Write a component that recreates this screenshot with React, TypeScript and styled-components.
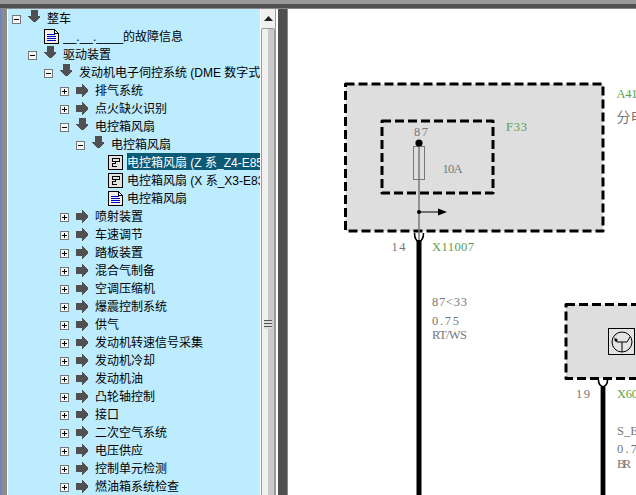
import React from 'react';
import styled, { createGlobalStyle } from 'styled-components';

type NodeKind = 'open' | 'closed' | 'doc' | 'diagram';

interface TreeNode {
  depth: number;
  kind: NodeKind;
  label: string;
  selected?: boolean;
}

const NODES: TreeNode[] = [
  { depth: 0, kind: 'open', label: '整车' },
  { depth: 1, kind: 'doc', label: '__.__.____的故障信息' },
  { depth: 1, kind: 'open', label: '驱动装置' },
  { depth: 2, kind: 'open', label: '发动机电子伺控系统 (DME 数字式电子伺控系统)' },
  { depth: 3, kind: 'closed', label: '排气系统' },
  { depth: 3, kind: 'closed', label: '点火缺火识别' },
  { depth: 3, kind: 'open', label: '电控箱风扇' },
  { depth: 4, kind: 'open', label: '电控箱风扇' },
  { depth: 5, kind: 'diagram', label: '电控箱风扇 (Z 系_Z4-E85)', selected: true },
  { depth: 5, kind: 'diagram', label: '电控箱风扇 (X 系_X3-E83)' },
  { depth: 5, kind: 'doc', label: '电控箱风扇' },
  { depth: 3, kind: 'closed', label: '喷射装置' },
  { depth: 3, kind: 'closed', label: '车速调节' },
  { depth: 3, kind: 'closed', label: '踏板装置' },
  { depth: 3, kind: 'closed', label: '混合气制备' },
  { depth: 3, kind: 'closed', label: '空调压缩机' },
  { depth: 3, kind: 'closed', label: '爆震控制系统' },
  { depth: 3, kind: 'closed', label: '供气' },
  { depth: 3, kind: 'closed', label: '发动机转速信号采集' },
  { depth: 3, kind: 'closed', label: '发动机冷却' },
  { depth: 3, kind: 'closed', label: '发动机油' },
  { depth: 3, kind: 'closed', label: '凸轮轴控制' },
  { depth: 3, kind: 'closed', label: '接口' },
  { depth: 3, kind: 'closed', label: '二次空气系统' },
  { depth: 3, kind: 'closed', label: '电压供应' },
  { depth: 3, kind: 'closed', label: '控制单元检测' },
  { depth: 3, kind: 'closed', label: '燃油箱系统检查' },
];

const Expander = ({ open }: { open: boolean }) => (
  <ExpanderSvg width="9" height="9" viewBox="0 0 9 9" shapeRendering="crispEdges">
    <rect x="0.5" y="0.5" width="8" height="8" fill="#f4f8f8" stroke="#777" />
    <path d="M2 4.5h5" stroke="#000" />
    {!open && <path d="M4.5 2v5" stroke="#000" />}
  </ExpanderSvg>
);

const ArrowIcon = ({ open }: { open: boolean }) => (
  <ArrowSvg $open={open} width="12" height="13" viewBox="0 0 12 13" shapeRendering="crispEdges">
    <path
      d="M0 3h6V0h1v1h1v1h1v1h1v1h1v1h1v3h-1v1h-1v1H9v1H8v1H7v1H6v-3H0z"
      fill="#505050"
      transform={open ? 'rotate(90 6 6.5)' : undefined}
    />
  </ArrowSvg>
);

const DocIcon = () => (
  <NodeSvg width="15" height="15" viewBox="0 0 15 15" shapeRendering="crispEdges">
    <path d="M0.5 0.5h10l4 4v10h-14z" fill="#f2efe6" stroke="#000" />
    <path d="M10.5 0.5v4h4" fill="none" stroke="#000" />
    <path d="M3 5.5h8M3 7.5h9M3 9.5h9M3 11.5h9" stroke="#0000c8" />
  </NodeSvg>
);

const DiagramIcon = () => (
  <NodeSvg width="15" height="15" viewBox="0 0 15 15" shapeRendering="crispEdges">
    <rect x="0.5" y="0.5" width="14" height="14" fill="#e2e2e2" stroke="#000" />
    <path d="M4.5 3.500h7v3h-7zM7.500 6.500v2h-3v3h4" fill="none" stroke="#000" strokeWidth="1" />
  </NodeSvg>
);

const NodeGlyph = ({ kind }: { kind: NodeKind }) => {
  if (kind === 'doc') return <DocIcon />;
  if (kind === 'diagram') return <DiagramIcon />;
  return <ArrowIcon open={kind === 'open'} />;
};

const WiringDiagram = () => (
  <DiagramSvg width="348" height="486" viewBox="288 9 348 486">
    <DashedBox x="345.500" y="84" width="257.500" height="147" />
    <DashedBox x="382" y="121" width="111" height="72" />
    <DashedBox x="566" y="304.500" width="90" height="74" />

    <line x1="419" y1="143" x2="419" y2="240" stroke="#777" strokeWidth="1.5" />
    <rect x="413.500" y="146.500" width="11" height="33" fill="none" stroke="#777" strokeWidth="1" />
    <circle cx="419" cy="143" r="3.600" fill="#000" />
    <circle cx="419" cy="212" r="2" fill="#000" />
    <line x1="419" y1="212" x2="440" y2="212" stroke="#000" strokeWidth="1" />
    <path d="M438 208.500l9 3.500-9 3.500z" fill="#000" />

    <path d="M414.500 233c0 5 2 8 4.500 9 2.500-1 4.500-4 4.500-9" fill="none" stroke="#000" strokeWidth="1.600" />
    <line x1="419" y1="240" x2="419" y2="495" stroke="#000" strokeWidth="5" />

    <path d="M598.500 380c0 3 2 6 4.500 7 2.500-1 4.500-4 4.500-7" fill="none" stroke="#000" strokeWidth="1.600" />
    <line x1="603" y1="386" x2="603" y2="495" stroke="#999" strokeWidth="6" />
    <line x1="603" y1="386" x2="603" y2="495" stroke="#000" strokeWidth="4" />

    <rect x="608.500" y="328.500" width="26" height="26" fill="#e4e4e4" stroke="#000" strokeWidth="1" />
    <circle cx="622" cy="342" r="10" fill="none" stroke="#000" strokeWidth="1" />
    <path d="M622 342v10M622 342h-5l-2.500-4M622 342h5l3-5" fill="none" stroke="#000" strokeWidth="1" />
    <circle cx="616" cy="340" r="1.500" fill="#000" />

    <Label x="414" y="135.500" textLength={14}>87</Label>
    <Label x="442.500" y="172.500" textLength={20}>10A</Label>
    <Label x="391.500" y="250.500" textLength={14}>14</Label>
    <Label x="432" y="305.500" textLength={35}>87&lt;33</Label>
    <Label x="432" y="325" textLength={27}>0.75</Label>
    <Label x="432" y="339" textLength={35}>RT/WS</Label>
    <Label x="576" y="397.500" textLength={14}>19</Label>
    <Label x="617" y="435" textLength={21}>S_E</Label>
    <Label x="617" y="452.500" textLength={20}>0.7</Label>
    <Label x="617" y="467.500" textLength={14}>BR</Label>
    <Label $code x="506" y="130.500" textLength={21}>F33</Label>
    <Label $code x="616.500" y="98" textLength={21}>A41</Label>
    <Label $code x="432" y="250.500" textLength={42}>X11007</Label>
    <Label $code x="617" y="397.500" textLength={21}>X60</Label>
    <SideNote x="616.500" y="122">分电</SideNote>
  </DiagramSvg>
);

export default function App() {
  return (
    <Window>
      <GlobalStyle />
      <TopStrip />
      <TopBand />
      <Workspace>
        <LeftEdge />
        <TreePanel>
          <TreeList>
            {NODES.map((node, i) => (
              <Row key={i} $depth={node.depth}>
                <ExpanderSlot>
                  {(node.kind === 'open' || node.kind === 'closed') && (
                    <Expander open={node.kind === 'open'} />
                  )}
                </ExpanderSlot>
                <GlyphSlot>
                  <NodeGlyph kind={node.kind} />
                </GlyphSlot>
                <RowLabel $selected={node.selected}>{node.label}</RowLabel>
              </Row>
            ))}
          </TreeList>
          <ScrollBar>
            <ScrollUp>
              <svg width="9" height="5" viewBox="0 0 9 5">
                <path d="M4.500 0L9 5H0z" fill="#222" />
              </svg>
            </ScrollUp>
            <ScrollThumb>
              <ThumbGrip />
            </ScrollThumb>
          </ScrollBar>
        </TreePanel>
        <Splitter />
        <DiagramPane>
          <WiringDiagram />
        </DiagramPane>
      </Workspace>
    </Window>
  );
}

const GlobalStyle = createGlobalStyle`
  html, body {
    margin: 0;
    padding: 0;
    background: #505050;
  }
`;

const Window = styled.div`
  width: 636px;
  height: 495px;
  display: flex;
  flex-direction: column;
  overflow: hidden;
  font-family: "Liberation Sans", "Noto Sans CJK SC", sans-serif;
  font-size: 12px;
`;

const TopStrip = styled.div`
  height: 4px;
  flex: none;
  background: #999;
`;

const TopBand = styled.div`
  height: 4px;
  flex: none;
  background: #505050;
  border-bottom: 1px solid #888;
`;

const Workspace = styled.div`
  flex: 1;
  min-height: 0;
  display: flex;
`;

const LeftEdge = styled.div`
  width: 2px;
  flex: none;
  background: #6c86c4;
  border-right: 5px solid #8c8c8c;
`;

const TreePanel = styled.div`
  width: 270px;
  flex: none;
  display: flex;
  border-left: 1px solid #fff;
  background: #fff;
`;

const TreeList = styled.div`
  width: 252px;
  flex: none;
  background: #bdecff;
  overflow: hidden;
`;

const Row = styled.div<{ $depth: number }>`
  height: 18px;
  display: flex;
  align-items: flex-start;
  padding-left: ${p => 4 + p.$depth * 16}px;
  white-space: nowrap;
`;

const ExpanderSlot = styled.div`
  width: 16px;
  flex: none;
  padding-top: 6px;
`;

const ExpanderSvg = styled.svg`
  display: block;
`;

const GlyphSlot = styled.div`
  width: 19px;
  flex: none;
`;

const ArrowSvg = styled.svg<{ $open: boolean }>`
  display: block;
  margin-top: ${p => (p.$open ? 0 : 3)}px;
`;

const NodeSvg = styled.svg`
  display: block;
  margin-top: 2px;
`;

const RowLabel = styled.span<{ $selected?: boolean }>`
  flex: 1;
  min-width: 0;
  height: 17px;
  box-sizing: border-box;
  padding-top: 4px;
  line-height: 13px;
  color: ${p => (p.$selected ? '#fff' : '#000')};
  background: ${p => (p.$selected ? '#0c5a76' : 'transparent')};
  overflow: hidden;
`;

const ScrollBar = styled.div`
  width: 14px;
  flex: none;
  margin-left: 1px;
  display: flex;
  flex-direction: column;
  overflow: hidden;
  background: #f0f0f0;
  border-right: 1px solid #999;
`;

const ScrollUp = styled.div`
  height: 19px;
  flex: none;
  display: flex;
  align-items: center;
  justify-content: center;
`;

const ScrollThumb = styled.div`
  height: 594px;
  flex: none;
  border: 1px solid #9a9a9a;
  border-radius: 2px 2px 0 0;
  background: linear-gradient(90deg, #f0f0f0 0 46%, #c9c9c9 46% 100%);
  display: flex;
  justify-content: center;
  padding-top: 291px;
  box-sizing: border-box;
`;

const ThumbGrip = styled.div`
  width: 8px;
  height: 9px;
  background: repeating-linear-gradient(180deg, #555 0 1px, #ddd 1px 3px);
`;

const Splitter = styled.div`
  width: 9px;
  flex: none;
  background: #505050;
  border-right: 1px solid #8a8a8a;
`;

const DiagramPane = styled.div`
  flex: 1;
  min-width: 0;
  background: #fff;
  overflow: hidden;
`;

const DiagramSvg = styled.svg`
  display: block;
`;

const DashedBox = styled.rect`
  fill: #dedede;
  stroke: #000;
  stroke-width: 3;
  stroke-dasharray: 9 4;
  stroke-linejoin: round;
`;

const Label = styled.text<{ $code?: boolean }>`
  font-family: "Liberation Serif", serif;
  font-size: 12.5px;
  fill: ${p => (p.$code ? '#5c9e4c' : '#777')};
`;

const SideNote = styled.text`
  font-family: "Noto Sans CJK SC", sans-serif;
  font-size: 14px;
  fill: #777;
`;
